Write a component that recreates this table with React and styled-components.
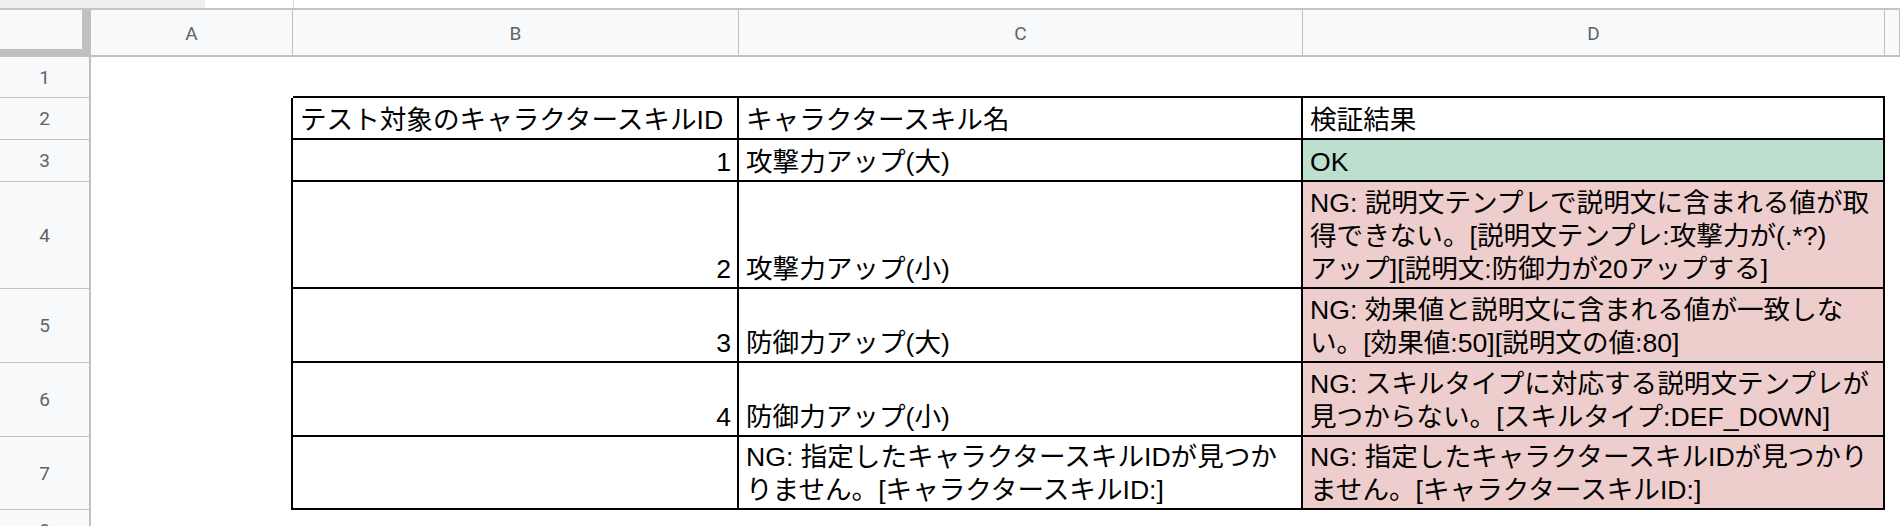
import React from "react";
import styled, { createGlobalStyle } from "styled-components";

const GlobalStyle = createGlobalStyle`
  html, body {
    margin: 0;
    padding: 0;
    background: #fff;
    overflow: hidden;
  }
`;

const Page = styled.div`
  width: 1900px;
  height: 526px;
  overflow: hidden;
  background: #fff;
  font-family: "Liberation Sans", "Noto Sans CJK JP", sans-serif;
`;

const TopStrip = styled.div`
  display: flex;
  height: 8px;
  border-bottom: 2px solid #c4c4c4;
`;

const GrayTab = styled.div`
  width: 205px;
  background: #eeeeee;
`;

const StripDivider = styled.div`
  width: 1px;
  margin-left: 88px;
  background: #dadada;
`;

const Sheet = styled.div`
  display: grid;
  grid-template-columns: 91px 202px 446px 564px 582px 1fr;
  grid-template-rows: 47px 41px 42px 42px 107px 74px 74px 73px 41px;
`;

const Corner = styled.div`
  box-sizing: border-box;
  background: #f8f9fa;
  border-right: 9px solid #c0c0c0;
  border-bottom: 8px solid #c0c0c0;
`;

const ColHead = styled.div`
  box-sizing: border-box;
  display: flex;
  align-items: center;
  justify-content: center;
  background: #f8f9fa;
  border-right: 1px solid #c0c0c0;
  border-bottom: 2px solid #c0c0c0;
  color: #5f6368;
  font-family: Roboto, "Liberation Sans", sans-serif;
  font-size: 19px;
  padding-top: 2px;
`;

const RowHead = styled.div`
  box-sizing: border-box;
  display: flex;
  align-items: center;
  justify-content: center;
  background: #f8f9fa;
  border-right: 2px solid #c0c0c0;
  border-bottom: 1px solid #c0c0c0;
  color: #5f6368;
  font-family: Roboto, "Liberation Sans", sans-serif;
  font-size: 19px;
`;

const tones = {
  plain: "#ffffff",
  good: "#bcdfcf",
  bad: "#eecdcd",
};

const Cell = styled.div`
  box-sizing: border-box;
  display: flex;
  flex-direction: column;
  justify-content: flex-end;
  align-items: ${(p) => (p.$right ? "flex-end" : "flex-start")};
  padding: 0 6px 1px 7px;
  overflow: hidden;
  background: ${(p) => tones[p.$tone || "plain"]};
  border-right: ${(p) => (p.$edgeRight ? "2px solid #000" : "none")};
  border-bottom: ${(p) => (p.$edgeBottom ? "2px solid #000" : "none")};
  color: #000;
  font-size: 26.6px;
  line-height: 33px;
`;

const Line = styled.span`
  white-space: nowrap;
`;

const columns = ["A", "B", "C", "D", ""];

const rows = [
  {
    id: ["テスト対象のキャラクタースキルID"],
    idLeft: true,
    name: ["キャラクタースキル名"],
    result: ["検証結果"],
    tone: "plain",
  },
  { id: ["1"], name: ["攻撃力アップ(大)"], result: ["OK"], tone: "good" },
  {
    id: ["2"],
    name: ["攻撃力アップ(小)"],
    result: [
      "NG: 説明文テンプレで説明文に含まれる値が取",
      "得できない。[説明文テンプレ:攻撃力が(.*?)",
      "アップ][説明文:防御力が20アップする]",
    ],
    tone: "bad",
  },
  {
    id: ["3"],
    name: ["防御力アップ(大)"],
    result: ["NG: 効果値と説明文に含まれる値が一致しな", "い。[効果値:50][説明文の値:80]"],
    tone: "bad",
  },
  {
    id: ["4"],
    name: ["防御力アップ(小)"],
    result: ["NG: スキルタイプに対応する説明文テンプレが", "見つからない。[スキルタイプ:DEF_DOWN]"],
    tone: "bad",
  },
  {
    id: [],
    name: ["NG: 指定したキャラクタースキルIDが見つか", "りません。[キャラクタースキルID:]"],
    result: ["NG: 指定したキャラクタースキルIDが見つかり", "ません。[キャラクタースキルID:]"],
    tone: "bad",
  },
];

function Lines({ items }) {
  return items.map((t) => <Line key={t}>{t}</Line>);
}

export default function App() {
  return (
    <Page>
      <GlobalStyle />
      <TopStrip>
        <GrayTab />
        <StripDivider />
      </TopStrip>
      <Sheet>
        <Corner />
        {columns.map((c, i) => (
          <ColHead key={i}>{c}</ColHead>
        ))}

        <RowHead>1</RowHead>
        <Cell />
        <Cell $edgeBottom />
        <Cell $edgeBottom />
        <Cell $edgeBottom />
        <Cell />

        {rows.map((r, i) => (
          <React.Fragment key={i}>
            <RowHead>{i + 2}</RowHead>
            <Cell $edgeRight />
            <Cell $edgeRight $edgeBottom $right={!r.idLeft}>
              <Lines items={r.id} />
            </Cell>
            <Cell $edgeRight $edgeBottom>
              <Lines items={r.name} />
            </Cell>
            <Cell $edgeRight $edgeBottom $tone={r.tone}>
              <Lines items={r.result} />
            </Cell>
            <Cell />
          </React.Fragment>
        ))}

        <RowHead>8</RowHead>
      </Sheet>
    </Page>
  );
}
